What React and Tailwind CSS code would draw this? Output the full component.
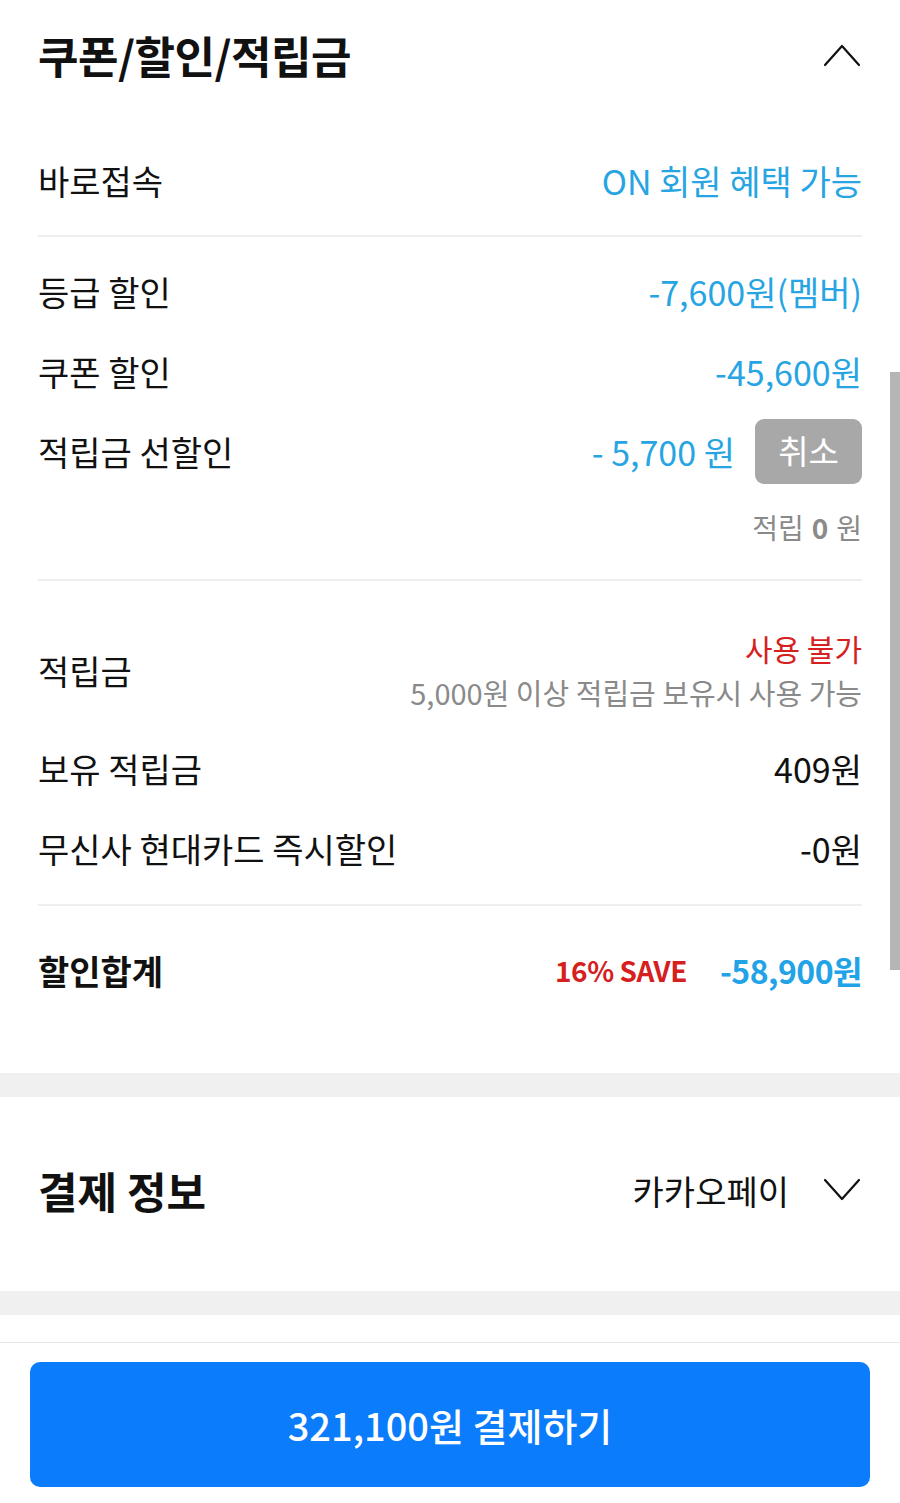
const FONT = "font-['Noto_Sans_CJK_KR','Noto_Sans',sans-serif]";

function Chevron({ up = false }) {
  return (
    <svg width="38" height="24" viewBox="0 0 38 24" fill="none" className="mr-[1px]">
      <polyline
        points={up ? '2,22 19,3 36,22' : '2,2 19,21 36,2'}
        stroke="#111"
        strokeWidth="2.2"
        strokeLinecap="round"
        strokeLinejoin="round"
      />
    </svg>
  );
}

function Row({ label, children, className = 'h-[80px]' }) {
  return (
    <div className={`flex items-center justify-between ${className}`}>
      <span className="text-[34px] text-[#111]">{label}</span>
      {children}
    </div>
  );
}

function Divider() {
  return <div className="h-[2px] bg-[#eeeeee]" />;
}

export default function App() {
  return (
    <div className={`relative w-[900px] min-h-[1503px] bg-white ${FONT}`}>
      <section className="px-[38px]">
        <div className="flex h-[110px] items-center justify-between">
          <h2 className="text-[44px] font-bold tracking-[-0.5px] text-[#111]">쿠폰/할인/적립금</h2>
          <Chevron up />
        </div>

        <Row label="바로접속" className="h-[125px] pt-[15px]">
          <span className="text-[34px] text-[#27a5e3]">ON 회원 혜택 가능</span>
        </Row>
        <Divider />

        <div className="pt-[14px]">
          <Row label="등급 할인">
            <span className="text-[34px] text-[#27a5e3]">-7,600원(멤버)</span>
          </Row>
          <Row label="쿠폰 할인">
            <span className="text-[34px] text-[#27a5e3]">-45,600원</span>
          </Row>
          <Row label="적립금 선할인">
            <div className="flex items-center gap-[20px]">
              <span className="text-[34px] text-[#27a5e3]">- 5,700 원</span>
              <button className="flex h-[65px] w-[107px] items-center justify-center rounded-[9px] bg-[#a8a8a8] text-[33px] text-white">
                취소
              </button>
            </div>
          </Row>
          <div className="mt-[16px] mb-[32px] flex h-[40px] items-center justify-end text-[28px] text-[#8a8a8a]">
            적립 <b className="mx-[8px] font-bold">0</b>원
          </div>
        </div>
        <Divider />

        <div className="mt-[45px] flex items-center justify-between">
          <span className="text-[34px] text-[#111]">적립금</span>
          <div className="flex flex-col items-end">
            <span className="h-[44px] text-[30px] leading-[44px] text-[#d61f1f]">사용 불가</span>
            <span className="h-[44px] text-[29px] leading-[44px] text-[#8a8a8a]">5,000원 이상 적립금 보유시 사용 가능</span>
          </div>
        </div>

        <div className="mt-[14px]">
          <Row label="보유 적립금">
            <span className="text-[34px] text-[#111]">409원</span>
          </Row>
          <Row label="무신사 현대카드 즉시할인">
            <span className="text-[34px] text-[#111]">-0원</span>
          </Row>
        </div>
        <div className="mt-[16px]">
          <Divider />
        </div>

        <div className="flex h-[128px] items-center justify-between">
          <span className="text-[34px] font-bold text-[#111]">할인합계</span>
          <div className="flex items-center gap-[33px]">
            <span className="text-[28px] font-bold tracking-[-0.5px] text-[#d61f1f]">16% SAVE</span>
            <span className="text-[32px] font-bold tracking-[-0.5px] text-[#22a3e8]">-58,900원</span>
          </div>
        </div>
        <div className="h-[39px]" />
      </section>

      <div className="h-[24px] bg-[#f0f0f0]" />

      <section className="h-[194px] px-[38px] pt-[53px]">
        <div className="flex h-[80px] items-center justify-between">
          <h2 className="text-[43px] font-bold text-[#111]">결제 정보</h2>
          <div className="flex items-center gap-[34px]">
            <span className="text-[34px] text-[#111]">카카오페이</span>
            <Chevron />
          </div>
        </div>
      </section>

      <div className="h-[24px] bg-[#f0f0f0]" />
      <div className="h-[27px]" />
      <div className="h-px bg-[#e8e8e8]" />

      <div className="px-[30px] pt-[19px] pb-[16px]">
        <button className="flex h-[125px] w-full items-center justify-center rounded-[10px] bg-[#0b7cfb] text-[38px] font-medium text-white">
          321,100원 결제하기
        </button>
      </div>

      <div className="absolute right-0 top-[372px] h-[598px] w-[10px] bg-[#b5b5b5]" />
    </div>
  );
}
